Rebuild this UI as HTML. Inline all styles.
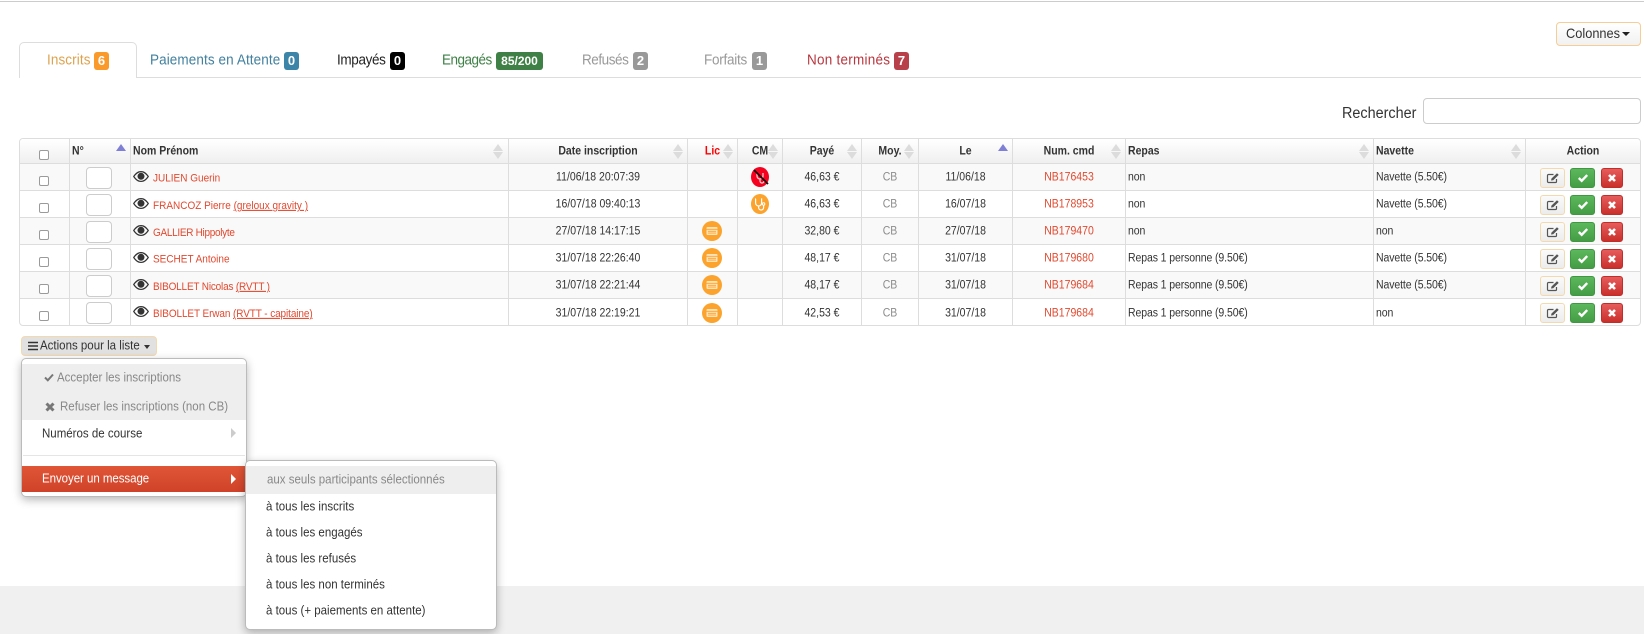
<!DOCTYPE html>
<html lang="fr"><head><meta charset="utf-8"><title>Inscrits</title>
<style>
html,body{margin:0;padding:0;background:#fff}
body{width:1644px;height:634px;position:relative;overflow:hidden;font-family:"Liberation Sans",sans-serif;color:#333}
#page{position:absolute;left:0;top:0;width:1644px;height:634px;overflow:hidden;filter:blur(.3px)}
.t{position:absolute;white-space:nowrap;line-height:1;transform:translateY(-50%) scaleY(1.1)}
.b{position:absolute;box-sizing:border-box;color:#fff;font-weight:bold;font-size:13px;text-align:center;border-radius:3px;height:18px;line-height:18px;top:52px}
.tab{font-size:13.5px;top:60px}
#wrap{position:absolute;left:19px;top:138px;width:1622px;height:188px;box-sizing:border-box;border:1px solid #ddd;border-radius:4px;overflow:hidden}
table{border-collapse:separate;border-spacing:0;table-layout:fixed;width:1620px}
td,th{box-sizing:border-box;border-right:1px solid #ddd;border-bottom:1px solid #ddd;padding:0 2px;font-size:10.5px;position:relative;overflow:visible;white-space:nowrap}
td:last-child,th:last-child{border-right:0}
tr:last-child td{border-bottom:0}
th{height:25px;background:linear-gradient(#fff,#efefef);color:#333;font-size:10.5px;font-weight:bold;text-align:center}
th.l,td.l{text-align:left}
td{height:27px;text-align:center;color:#333}
td.l s{letter-spacing:-.1px}
tbody tr:nth-child(odd) td{background:#f9f9f9}
s{display:inline-block;text-decoration:none;transform:scaleY(1.1)}
.r{color:#e2492f}
.r u{text-decoration:underline}
.g{color:#8c8c8c}
.up,.dn{position:absolute;width:0;height:0;margin-left:-1px;border-left:5px solid transparent;border-right:5px solid transparent}
.up{top:5px;border-bottom:7px solid #dcdcdc}
.dn{top:13px;border-top:7px solid #dcdcdc}
.up.on{border-bottom-color:#7f7fd5}
input[type=checkbox]{appearance:none;-webkit-appearance:none;position:absolute;margin:0;width:10px;height:10px;left:19px;top:12px;box-sizing:border-box;border:1px solid #9a9a9a;border-radius:2px;background:#fff}
th input[type=checkbox]{top:11px}
.num{position:absolute;left:16px;top:3px;width:26px;height:22px;box-sizing:border-box;border:1px solid #ccc;border-radius:4px;background:#fff;padding:0}
.eye{position:absolute;left:2px;top:6px;width:16px;height:13px}
td.l s.nm{position:absolute;left:22px;top:15px;font-size:10px;letter-spacing:0;transform:translateY(-50%) scaleY(1.1)}
.ic{position:absolute;left:50%;top:50%;transform:translate(-50%,-50%)}
.lc{margin-left:-1px}
.bt{position:absolute;top:4px;height:20px;box-sizing:border-box;border-radius:3px}
.ed{left:14px;width:25px;background:linear-gradient(#fafafa,#ececec);border:1px solid #f5d9ae}
.ok{left:44px;width:25px;background:linear-gradient(#5cb85c,#449d44);border:1px solid #419641}
.ko{left:75px;width:22px;background:linear-gradient(#e65c5c,#c9302c);border:1px solid #c12e2a}
.bt svg{position:absolute;left:50%;top:50%;transform:translate(-50%,-50%)}
.menu{position:absolute;box-sizing:border-box;background:#fff;border:1px solid #bbb;border-radius:5px;box-shadow:0 3px 9px rgba(0,0,0,.28)}
.mi{font-size:11.5px}
</style></head><body><div id="page">
<svg width="0" height="0" style="position:absolute"><defs>
<symbol id="eye" viewBox="0 0 16 13"><path fill="#333" fill-rule="evenodd" d="M0 6.5C2.5 2.5 5.2 1 8 1s5.500 1.500 8 5.500C13.500 10.500 10.800 12 8 12S2.500 10.500 0 6.500ZM1.500 6.500C3.500 9.300 5.700 10.800 8 10.800s4.500-1.500 6.500-4.300C12.500 3.700 10.300 2.200 8 2.200S3.500 3.700 1.500 6.500Z"/><circle cx="8" cy="6.300" r="3.500" fill="#333"/></symbol>
<symbol id="lic" viewBox="0 0 20 20"><circle cx="10" cy="10" r="10" fill="#fba32c"/><rect x="4.500" y="6" width="11" height="8" rx="1" fill="#ffe3b8"/><path d="M4.500 8.300H15.500M6 10.300H14M6 12.100H14" stroke="#fba32c" stroke-width=".9"/></symbol>
<symbol id="edit" viewBox="0 0 13 11"><path d="M10 6.500V9a1 1 0 0 1-1 1H2A1 1 0 0 1 1 9V3a1 1 0 0 1 1-1h5" fill="none" stroke="#555" stroke-width="1.200"/><path d="M4.500 8L5 6 10.500.8 12.200 2.400 6.700 7.700Z" fill="#555"/></symbol>
<symbol id="chk" viewBox="0 0 11 9"><path d="M1.300 4.500L4.200 7.300 9.700 1.600" fill="none" stroke="#fff" stroke-width="2.400"/></symbol>
<symbol id="xx" viewBox="0 0 9 9"><path d="M1.500 1.500L7.500 7.500M7.500 1.500L1.500 7.500" fill="none" stroke="#fff" stroke-width="2.600"/></symbol>
</defs></svg>

<div style="position:absolute;left:0;top:1px;width:1644px;height:1px;background:#ccc"></div>

<div style="position:absolute;left:19px;top:77px;width:1622px;height:1px;background:#ddd"></div>
<div style="position:absolute;left:19px;top:42px;width:118px;height:36px;box-sizing:border-box;border:1px solid #ddd;border-bottom:0;border-radius:5px 5px 0 0;background:#fff"></div>

<div class="t tab" style="left:47px;color:#dea24e;letter-spacing:.1px">Inscrits</div><div class="b" style="left:94px;width:15px;background:#f99a2b">6</div>
<div class="t tab" style="left:150px;color:#41809f;letter-spacing:.1px">Paiements en Attente</div><div class="b" style="left:284px;width:15px;background:#3d85a8">0</div>
<div class="t tab" style="left:337px;color:#222;letter-spacing:-.35px">Impayés</div><div class="b" style="left:390px;width:15px;background:#000">0</div>
<div class="t tab" style="left:442px;color:#3e8045;letter-spacing:-.5px">Engagés</div><div class="b" style="left:496px;width:47px;background:#3e8045;font-size:12px">85/200</div>
<div class="t tab" style="left:582px;color:#999;letter-spacing:-.45px">Refusés</div><div class="b" style="left:633px;width:15px;background:#999">2</div>
<div class="t tab" style="left:704px;color:#999;letter-spacing:-.25px">Forfaits</div><div class="b" style="left:752px;width:15px;background:#999">1</div>
<div class="t tab" style="left:807px;color:#b8353d;letter-spacing:.25px">Non terminés</div><div class="b" style="left:894px;width:15px;background:#b8404a">7</div>

<div style="position:absolute;left:1556px;top:22px;width:85px;height:24px;box-sizing:border-box;border:1px solid #f5cd95;border-radius:4px;background:linear-gradient(#fff,#f1f1f1)"></div>
<div class="t" style="left:1566px;top:33.500px;font-size:12.8px;color:#333">Colonnes</div>
<div style="position:absolute;left:1622px;top:32px;width:0;height:0;border-left:4px solid transparent;border-right:4px solid transparent;border-top:4px solid #222"></div>

<div class="t" style="left:1342px;top:114px;font-size:14.4px;color:#333">Rechercher</div>
<div style="position:absolute;left:1423px;top:98px;width:218px;height:26px;box-sizing:border-box;border:1px solid #ccc;border-radius:4px;background:#fff"></div>

<div id="wrap"><table>
<colgroup><col style="width:50px"><col style="width:61px"><col style="width:378px"><col style="width:179px"><col style="width:50px"><col style="width:45px"><col style="width:79px"><col style="width:57px"><col style="width:94px"><col style="width:113px"><col style="width:248px"><col style="width:152px"><col style="width:114px"></colgroup>
<thead><tr>
<th><input type="checkbox"></th>
<th class="l"><s>N°</s><i class="up on" style="left:47px"></i></th>
<th class="l"><s>Nom Prénom</s><i class="up" style="left:363px"></i><i class="dn" style="left:363px"></i></th>
<th><s>Date inscription</s><i class="up" style="left:165px"></i><i class="dn" style="left:165px"></i></th>
<th><s style="color:#f00">Lic</s><i class="up" style="left:36px"></i><i class="dn" style="left:36px"></i></th>
<th><s>CM</s><i class="up" style="left:31px"></i><i class="dn" style="left:31px"></i></th>
<th><s>Payé</s><i class="up" style="left:65px"></i><i class="dn" style="left:65px"></i></th>
<th><s>Moy.</s><i class="up" style="left:43px"></i><i class="dn" style="left:43px"></i></th>
<th><s>Le</s><i class="up on" style="left:80px"></i></th>
<th><s>Num. cmd</s><i class="up" style="left:99px"></i><i class="dn" style="left:99px"></i></th>
<th class="l"><s>Repas</s><i class="up" style="left:234px"></i><i class="dn" style="left:234px"></i></th>
<th class="l"><s>Navette</s><i class="up" style="left:138px"></i><i class="dn" style="left:138px"></i></th>
<th><s>Action</s></th>
</tr></thead>
<tbody>
<tr><td><input type="checkbox"></td><td><div class="num"></div></td>
<td class="l"><svg class="eye"><use href="#eye"/></svg><s class="r nm">JULIEN Guerin</s></td>
<td><s>11/06/18 20:07:39</s></td><td></td>
<td><svg class="ic" width="18" height="20" viewBox="0 0 18 20"><ellipse cx="9" cy="10" rx="9" ry="10" fill="#f5001e"/><path d="M6 6v3a3 3 0 0 0 6 0V6M9 12v2a2 2 0 0 0 4 0" fill="none" stroke="#ffc9c9" stroke-width="1.300"/><path d="M3 3L17 17" stroke="#111" stroke-width="1.800"/></svg></td>
<td><s>46,63 €</s></td><td><s class="g">CB</s></td><td><s>11/06/18</s></td><td><s class="r">NB176453</s></td>
<td class="l"><s>non</s></td><td class="l"><s>Navette (5.50€)</s></td>
<td><div class="bt ed"><svg width="13" height="11"><use href="#edit"/></svg></div><div class="bt ok"><svg width="11" height="9"><use href="#chk"/></svg></div><div class="bt ko"><svg width="9" height="9"><use href="#xx"/></svg></div></td></tr>

<tr><td><input type="checkbox"></td><td><div class="num"></div></td>
<td class="l"><svg class="eye"><use href="#eye"/></svg><s class="r nm">FRANCOZ Pierre <u>(greloux gravity )</u></s></td>
<td><s>16/07/18 09:40:13</s></td><td></td>
<td><svg class="ic" width="18" height="20" viewBox="0 0 18 20"><ellipse cx="9" cy="10" rx="9" ry="10" fill="#fba32c"/><path d="M5 5H4.600V9a3 3 0 0 0 6 0V5H10M7.600 12v1.500a2.500 2.500 0 0 0 5 0V11" fill="none" stroke="#fff" stroke-width="1.200"/><circle cx="12.600" cy="10" r="1.200" fill="none" stroke="#fff"/></svg></td>
<td><s>46,63 €</s></td><td><s class="g">CB</s></td><td><s>16/07/18</s></td><td><s class="r">NB178953</s></td>
<td class="l"><s>non</s></td><td class="l"><s>Navette (5.50€)</s></td>
<td><div class="bt ed"><svg width="13" height="11"><use href="#edit"/></svg></div><div class="bt ok"><svg width="11" height="9"><use href="#chk"/></svg></div><div class="bt ko"><svg width="9" height="9"><use href="#xx"/></svg></div></td></tr>

<tr><td><input type="checkbox"></td><td><div class="num"></div></td>
<td class="l"><svg class="eye"><use href="#eye"/></svg><s class="r nm" style="letter-spacing:-.3px">GALLIER Hippolyte</s></td>
<td><s>27/07/18 14:17:15</s></td><td><svg class="ic lc" width="20" height="20"><use href="#lic"/></svg></td><td></td>
<td><s>32,80 €</s></td><td><s class="g">CB</s></td><td><s>27/07/18</s></td><td><s class="r">NB179470</s></td>
<td class="l"><s>non</s></td><td class="l"><s>non</s></td>
<td><div class="bt ed"><svg width="13" height="11"><use href="#edit"/></svg></div><div class="bt ok"><svg width="11" height="9"><use href="#chk"/></svg></div><div class="bt ko"><svg width="9" height="9"><use href="#xx"/></svg></div></td></tr>

<tr><td><input type="checkbox"></td><td><div class="num"></div></td>
<td class="l"><svg class="eye"><use href="#eye"/></svg><s class="r nm">SECHET Antoine</s></td>
<td><s>31/07/18 22:26:40</s></td><td><svg class="ic lc" width="20" height="20"><use href="#lic"/></svg></td><td></td>
<td><s>48,17 €</s></td><td><s class="g">CB</s></td><td><s>31/07/18</s></td><td><s class="r">NB179680</s></td>
<td class="l"><s>Repas 1 personne (9.50€)</s></td><td class="l"><s>Navette (5.50€)</s></td>
<td><div class="bt ed"><svg width="13" height="11"><use href="#edit"/></svg></div><div class="bt ok"><svg width="11" height="9"><use href="#chk"/></svg></div><div class="bt ko"><svg width="9" height="9"><use href="#xx"/></svg></div></td></tr>

<tr><td><input type="checkbox"></td><td><div class="num"></div></td>
<td class="l"><svg class="eye"><use href="#eye"/></svg><s class="r nm" style="letter-spacing:-.18px">BIBOLLET Nicolas <u>(RVTT )</u></s></td>
<td><s>31/07/18 22:21:44</s></td><td><svg class="ic lc" width="20" height="20"><use href="#lic"/></svg></td><td></td>
<td><s>48,17 €</s></td><td><s class="g">CB</s></td><td><s>31/07/18</s></td><td><s class="r">NB179684</s></td>
<td class="l"><s>Repas 1 personne (9.50€)</s></td><td class="l"><s>Navette (5.50€)</s></td>
<td><div class="bt ed"><svg width="13" height="11"><use href="#edit"/></svg></div><div class="bt ok"><svg width="11" height="9"><use href="#chk"/></svg></div><div class="bt ko"><svg width="9" height="9"><use href="#xx"/></svg></div></td></tr>

<tr><td><input type="checkbox"></td><td><div class="num"></div></td>
<td class="l"><svg class="eye"><use href="#eye"/></svg><s class="r nm" style="letter-spacing:-.1px">BIBOLLET Erwan <u>(RVTT - capitaine)</u></s></td>
<td><s>31/07/18 22:19:21</s></td><td><svg class="ic lc" width="20" height="20"><use href="#lic"/></svg></td><td></td>
<td><s>42,53 €</s></td><td><s class="g">CB</s></td><td><s>31/07/18</s></td><td><s class="r">NB179684</s></td>
<td class="l"><s>Repas 1 personne (9.50€)</s></td><td class="l"><s>non</s></td>
<td><div class="bt ed"><svg width="13" height="11"><use href="#edit"/></svg></div><div class="bt ok"><svg width="11" height="9"><use href="#chk"/></svg></div><div class="bt ko"><svg width="9" height="9"><use href="#xx"/></svg></div></td></tr>
</tbody></table></div>

<div style="position:absolute;left:21px;top:336px;width:136px;height:20px;box-sizing:border-box;border:1px solid #f5d9ae;border-radius:4px;background:#e1e1e1"></div>
<svg style="position:absolute;left:28px;top:341px" width="10" height="10"><path d="M0 1.500H10M0 5H10M0 8.500H10" stroke="#333" stroke-width="1.500"/></svg>
<div class="t mi" style="left:40px;top:347px;color:#333">Actions pour la liste</div>
<div style="position:absolute;left:144px;top:345px;width:0;height:0;border-left:3.500px solid transparent;border-right:3.500px solid transparent;border-top:4px solid #333"></div>

<div style="position:absolute;left:0;top:586px;width:1644px;height:48px;background:#f0f0f0"></div>

<div class="menu" style="left:21px;top:358px;width:226px;height:139px"></div>
<div style="position:absolute;left:22px;top:364px;width:224px;height:56px;background:#eee"></div>
<svg style="position:absolute;left:44px;top:373px" width="10" height="9" viewBox="0 0 10 9"><path d="M1 4.500L3.800 7.300 9 1.500" fill="none" stroke="#777" stroke-width="2"/></svg>
<div class="t mi" style="left:57px;top:379px;color:#888">Accepter les inscriptions</div>
<svg style="position:absolute;left:45px;top:402px" width="10" height="10" viewBox="0 0 10 10"><path d="M1.500 1.500L8.500 8.500M8.500 1.500L1.500 8.500" fill="none" stroke="#777" stroke-width="3"/></svg>
<div class="t mi" style="left:60px;top:407.500px;color:#888">Refuser les inscriptions (non CB)</div>
<div class="t mi" style="left:42px;top:434.500px;color:#333">Numéros de course</div>
<div style="position:absolute;left:231px;top:428px;width:0;height:0;border-top:5px solid transparent;border-bottom:5px solid transparent;border-left:5px solid #ccc"></div>
<div style="position:absolute;left:23px;top:455px;width:222px;height:1px;background:#e5e5e5"></div>
<div style="position:absolute;left:22px;top:466px;width:224px;height:26px;background:linear-gradient(#e05536,#cf4229)"></div>
<div class="t mi" style="left:42px;top:480px;color:#fff;letter-spacing:-.05px">Envoyer un message</div>
<div style="position:absolute;left:231px;top:474px;width:0;height:0;border-top:5px solid transparent;border-bottom:5px solid transparent;border-left:5px solid #fff"></div>

<div class="menu" style="left:245px;top:460px;width:252px;height:170px"></div>
<div style="position:absolute;left:246px;top:466px;width:250px;height:28px;background:#eee"></div>
<div class="t mi" style="left:267px;top:481px;color:#888">aux seuls participants sélectionnés</div>
<div class="t mi" style="left:266px;top:508px;color:#333">à tous les inscrits</div>
<div class="t mi" style="left:266px;top:534px;color:#333">à tous les engagés</div>
<div class="t mi" style="left:266px;top:560px;color:#333">à tous les refusés</div>
<div class="t mi" style="left:266px;top:586px;color:#333">à tous les non terminés</div>
<div class="t mi" style="left:266px;top:612px;color:#333">à tous (+ paiements en attente)</div>
</div></body></html>
